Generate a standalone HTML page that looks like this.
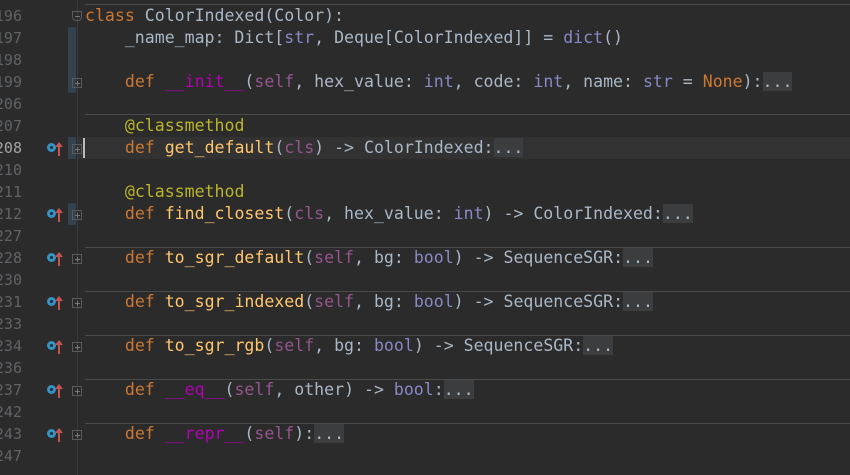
<!DOCTYPE html>
<html><head><style>
body{margin:0;width:850px;height:475px;background:#2b2b2b;overflow:hidden;position:relative;font-family:"DejaVu Sans Mono","Liberation Mono",monospace;}
.ln{position:absolute;left:-20px;width:42px;text-align:right;color:#606366;font-size:15px;line-height:22px;height:22px}
.code{position:absolute;left:85px;font-size:16.56px;line-height:22px;height:22px;color:#a9b7c6;white-space:pre}
.k{color:#cc7832}.d{color:#b200b2}.s{color:#94558d}.a{color:#bbb529}.b{color:#8888c6}.f{color:#ffc66d}
.fold{background:#3b3d3e;color:#a9b7c6}
.sep{position:absolute;left:85px;right:0;height:1px;background:#4a4a4a}
.gut{position:absolute;left:77px;top:0;width:1px;height:475px;background:#3a3a3a}
.box{position:absolute;left:72px;width:8px;height:8px;border:1px solid #5a5a5a}
.box:after{content:"";position:absolute;left:2px;top:4px;width:5px;height:1px;background:#777}
.box:before{content:"";position:absolute;left:4px;top:2px;width:1px;height:5px;background:#777}
.box.m:before{display:none}
.vcs{position:absolute;left:68px;width:8px;background:#34424d}
.ic{position:absolute;left:47px;width:9px;height:9px;border-radius:50%;background:#3592c4}
.ic:after{content:"";position:absolute;left:3px;top:3px;width:3px;height:3px;border-radius:50%;background:#2b2b2b}
.ar{position:absolute;left:58px;width:2px;height:11px;background:#c75450}
.ar:before{content:"";position:absolute;left:-3px;top:-3px;border-left:4px solid transparent;border-right:4px solid transparent;border-bottom:5px solid #c75450}
</style></head><body>
<div style="position:absolute;left:78px;right:0;top:137px;height:22px;background:#323232"></div>
<div class="gut"></div>
<div class="vcs" style="top:27px;height:66px"></div>
<div class="vcs" style="top:137px;height:22px"></div>
<div class="vcs" style="top:203px;height:22px"></div>
<div style="position:absolute;left:83px;top:138px;width:2px;height:20px;background:#bbb"></div>
<div class="sep" style="top:4px"></div>
<div class="sep" style="top:114px"></div>
<div class="sep" style="top:247px"></div>
<div class="sep" style="top:291px"></div>
<div class="sep" style="top:335px"></div>
<div class="sep" style="top:379px"></div>
<div class="sep" style="top:423px"></div>

<div class="ln" style="top:5px">196</div><div class="ln" style="top:27px">197</div><div class="ln" style="top:49px">198</div><div class="ln" style="top:71px">199</div><div class="ln" style="top:93px">206</div><div class="ln" style="top:115px">207</div><div class="ln" style="top:137px;color:#a4a3a3">208</div><div class="ln" style="top:159px">210</div><div class="ln" style="top:181px">211</div><div class="ln" style="top:203px">212</div><div class="ln" style="top:225px">227</div><div class="ln" style="top:247px">228</div><div class="ln" style="top:269px">230</div><div class="ln" style="top:291px">231</div><div class="ln" style="top:313px">233</div><div class="ln" style="top:335px">234</div><div class="ln" style="top:357px">236</div><div class="ln" style="top:379px">237</div><div class="ln" style="top:401px">242</div><div class="ln" style="top:423px">243</div><div class="ln" style="top:445px">247</div>

<div class="box m" style="top:11px;border-radius:0 0 4px 4px"></div>
<div class="box" style="top:78px"></div><div class="box" style="top:144px"></div><div class="box" style="top:210px"></div><div class="box" style="top:254px"></div><div class="box" style="top:298px"></div><div class="box" style="top:342px"></div><div class="box" style="top:386px"></div><div class="box" style="top:430px"></div>

<div class="ic" style="top:143px"></div><div class="ar" style="top:145px"></div>
<div class="ic" style="top:209px"></div><div class="ar" style="top:211px"></div>
<div class="ic" style="top:253px"></div><div class="ar" style="top:255px"></div>
<div class="ic" style="top:297px"></div><div class="ar" style="top:299px"></div>
<div class="ic" style="top:341px"></div><div class="ar" style="top:343px"></div>
<div class="ic" style="top:385px"></div><div class="ar" style="top:387px"></div>
<div class="ic" style="top:429px"></div><div class="ar" style="top:431px"></div>

<div class="code" style="top:5px"><span class="k">class</span> ColorIndexed(Color):</div>
<div class="code" style="top:27px">    _name_map: Dict[<span class="b">str</span>, Deque[ColorIndexed]] = <span class="b">dict</span>()</div>
<div class="code" style="top:71px">    <span class="k">def</span> <span class="d">__init__</span>(<span class="s">self</span>, hex_value: <span class="b">int</span>, code: <span class="b">int</span>, name: <span class="b">str</span> = <span class="k">None</span>):<span class="fold">...</span></div>
<div class="code" style="top:115px">    <span class="a">@classmethod</span></div>
<div class="code" style="top:137px">    <span class="k">def</span> <span class="f">get_default</span>(<span class="s">cls</span>) -> ColorIndexed:<span class="fold">...</span></div>
<div class="code" style="top:181px">    <span class="a">@classmethod</span></div>
<div class="code" style="top:203px">    <span class="k">def</span> <span class="f">find_closest</span>(<span class="s">cls</span>, hex_value: <span class="b">int</span>) -> ColorIndexed:<span class="fold">...</span></div>
<div class="code" style="top:247px">    <span class="k">def</span> <span class="f">to_sgr_default</span>(<span class="s">self</span>, bg: <span class="b">bool</span>) -> SequenceSGR:<span class="fold">...</span></div>
<div class="code" style="top:291px">    <span class="k">def</span> <span class="f">to_sgr_indexed</span>(<span class="s">self</span>, bg: <span class="b">bool</span>) -> SequenceSGR:<span class="fold">...</span></div>
<div class="code" style="top:335px">    <span class="k">def</span> <span class="f">to_sgr_rgb</span>(<span class="s">self</span>, bg: <span class="b">bool</span>) -> SequenceSGR:<span class="fold">...</span></div>
<div class="code" style="top:379px">    <span class="k">def</span> <span class="d">__eq__</span>(<span class="s">self</span>, other) -> <span class="b">bool</span>:<span class="fold">...</span></div>
<div class="code" style="top:423px">    <span class="k">def</span> <span class="d">__repr__</span>(<span class="s">self</span>):<span class="fold">...</span></div>
</body></html>
